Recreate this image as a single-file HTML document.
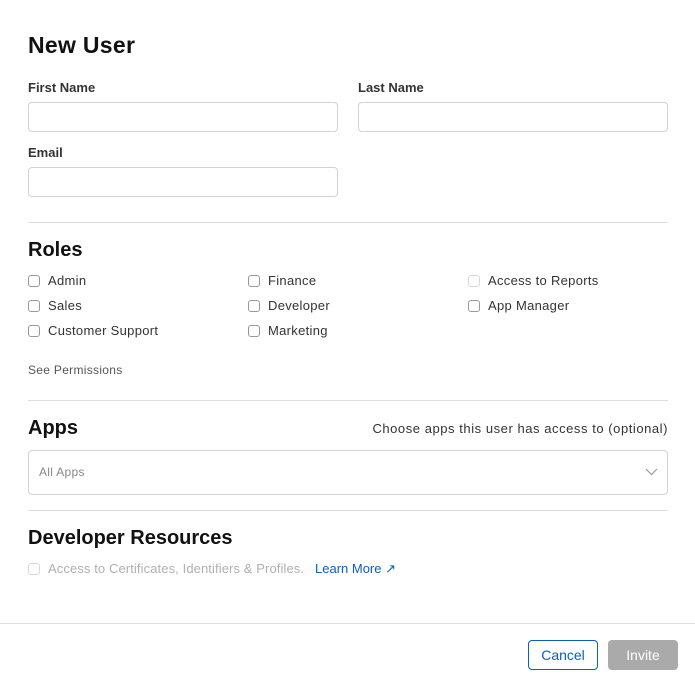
<!DOCTYPE html>
<html><head><style>
body{margin:0;width:695px;height:684px;background:#fff;font-family:"Liberation Sans",sans-serif;color:#1d1d1f;position:relative;overflow:hidden}
.a{position:absolute;white-space:nowrap}
.lbl{font-size:13px;font-weight:bold;color:#333}
.inp{position:absolute;height:28px;border:1px solid #d2d2d7;border-radius:4px;background:#fff}
.hr{position:absolute;left:28px;width:640px;height:1px;background:#dcdcdc}
.cb{position:absolute;width:10px;height:10px;border:1px solid #999;border-radius:3px}
.ct{font-size:13px;color:#333;letter-spacing:0.3px}
</style></head><body>
<div class="a" style="left:28px;top:32px;font-size:23px;font-weight:bold;color:#111;letter-spacing:0.3px">New User</div>
<div class="a lbl" style="left:28px;top:80px">First Name</div>
<div class="a lbl" style="left:358px;top:80px">Last Name</div>
<div class="inp" style="left:28px;top:102px;width:308px"></div>
<div class="inp" style="left:358px;top:102px;width:308px"></div>
<div class="a lbl" style="left:28px;top:145px">Email</div>
<div class="inp" style="left:28px;top:167px;width:308px"></div>
<div class="hr" style="top:222px"></div>
<div class="a" style="left:28px;top:239px;font-size:20px;font-weight:bold;color:#111">Roles</div>

<div class="cb" style="left:28px;top:275px"></div><div class="a ct" style="left:48px;top:273px">Admin</div>
<div class="cb" style="left:28px;top:300px"></div><div class="a ct" style="left:48px;top:298px">Sales</div>
<div class="cb" style="left:28px;top:325px"></div><div class="a ct" style="left:48px;top:323px">Customer Support</div>
<div class="cb" style="left:248px;top:275px"></div><div class="a ct" style="left:268px;top:273px">Finance</div>
<div class="cb" style="left:248px;top:300px"></div><div class="a ct" style="left:268px;top:298px">Developer</div>
<div class="cb" style="left:248px;top:325px"></div><div class="a ct" style="left:268px;top:323px">Marketing</div>
<div class="cb" style="left:468px;top:275px;border-color:#d8d8dc"></div><div class="a ct" style="left:488px;top:273px">Access to Reports</div>
<div class="cb" style="left:468px;top:300px"></div><div class="a ct" style="left:488px;top:298px">App Manager</div>

<div class="a" style="left:28px;top:363px;font-size:12px;color:#555;letter-spacing:0.3px">See Permissions</div>
<div class="hr" style="top:400px"></div>
<div class="a" style="left:28px;top:417px;font-size:20px;font-weight:bold;color:#111">Apps</div>
<div class="a ct" style="right:27px;top:421px;letter-spacing:0.55px">Choose apps this user has access to (optional)</div>
<div class="inp" style="left:28px;top:450px;width:638px;height:43px"></div>
<div class="a" style="left:39px;top:465px;font-size:12px;color:#888;letter-spacing:0.3px">All Apps</div>
<svg class="a" style="left:645px;top:468px" width="13" height="8"><path d="M1 1 L6.5 6.5 L12 1" stroke="#999" fill="none" stroke-width="1.2"/></svg>
<div class="hr" style="top:510px"></div>
<div class="a" style="left:28px;top:527px;font-size:20px;font-weight:bold;color:#111">Developer Resources</div>
<div class="cb" style="left:28px;top:563px;border-color:#d8d8dc"></div>
<div class="a" style="left:48px;top:561px;font-size:13px;color:#b0b0b0;letter-spacing:0.1px">Access to Certificates, Identifiers &amp; Profiles.</div>
<div class="a" style="left:315px;top:561px;font-size:13px;color:#0a5fc4">Learn More ↗</div>
<div style="position:absolute;left:0;top:623px;width:695px;height:1px;background:#dcdcdc"></div>
<div class="a" style="left:528px;top:640px;width:68px;height:28px;border:1px solid #0a5fc4;border-radius:4px;color:#0a5fc4;font-size:14px;text-align:center;line-height:28px">Cancel</div>
<div class="a" style="left:608px;top:640px;width:70px;height:30px;background:#aaa;border-radius:4px;color:#fff;font-size:14px;text-align:center;line-height:30px">Invite</div>
</body></html>
